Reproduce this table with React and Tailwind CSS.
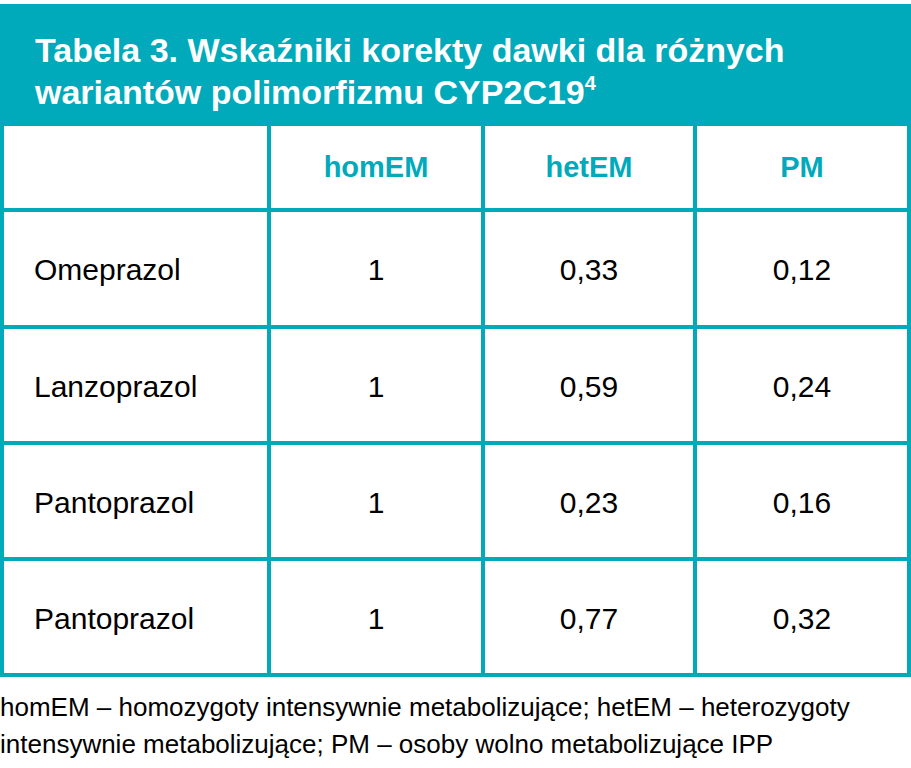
const rows = [
  ["Omeprazol", "1", "0,33", "0,12"],
  ["Lanzoprazol", "1", "0,59", "0,24"],
  ["Pantoprazol", "1", "0,23", "0,16"],
  ["Pantoprazol", "1", "0,77", "0,32"],
];

const font = { fontFamily: '"Liberation Sans", Arial, sans-serif' };

export default function App() {
  return (
    <div className="w-[911px] bg-white pt-[4px]" style={font}>
      <div className="h-[122px] bg-[#00aabb] px-[35px] pt-[25px] text-[34px] font-bold leading-[42px] text-white">
        Tabela 3. Wskaźniki korekty dawki dla różnych
        <br />
        wariantów polimorfizmu CYP2C19
        <sup className="relative top-[2px] align-top text-[20px] leading-none">4</sup>
      </div>

      <div className="grid grid-cols-[263px_210px_208px_210px] gap-[4px] bg-[#00aabb] px-[4px] pb-[4px]">
        <div className="h-[82px] bg-white" />
        {["homEM", "hetEM", "PM"].map((h) => (
          <div key={h} className="flex h-[82px] items-center justify-center bg-white pt-[2px] text-[29px] font-bold text-[#00aabb]">
            {h}
          </div>
        ))}

        {rows.map((r, i) =>
          r.map((c, j) => (
            <div
              key={i + "-" + j}
              className={`flex items-center bg-white pt-[2px] text-[30px] text-black ${i === 0 ? "h-[113px]" : "h-[112px]"} ${
                j === 0 ? "pl-[30px]" : "justify-center"
              }`}
            >
              {c}
            </div>
          ))
        )}
      </div>

      <p className="pt-[12px] text-[26px] leading-[37px] text-black">
        homEM – homozygoty intensywnie metabolizujące; hetEM – heterozygoty
        <br />
        intensywnie metabolizujące; PM – osoby wolno metabolizujące IPP
      </p>
    </div>
  );
}
